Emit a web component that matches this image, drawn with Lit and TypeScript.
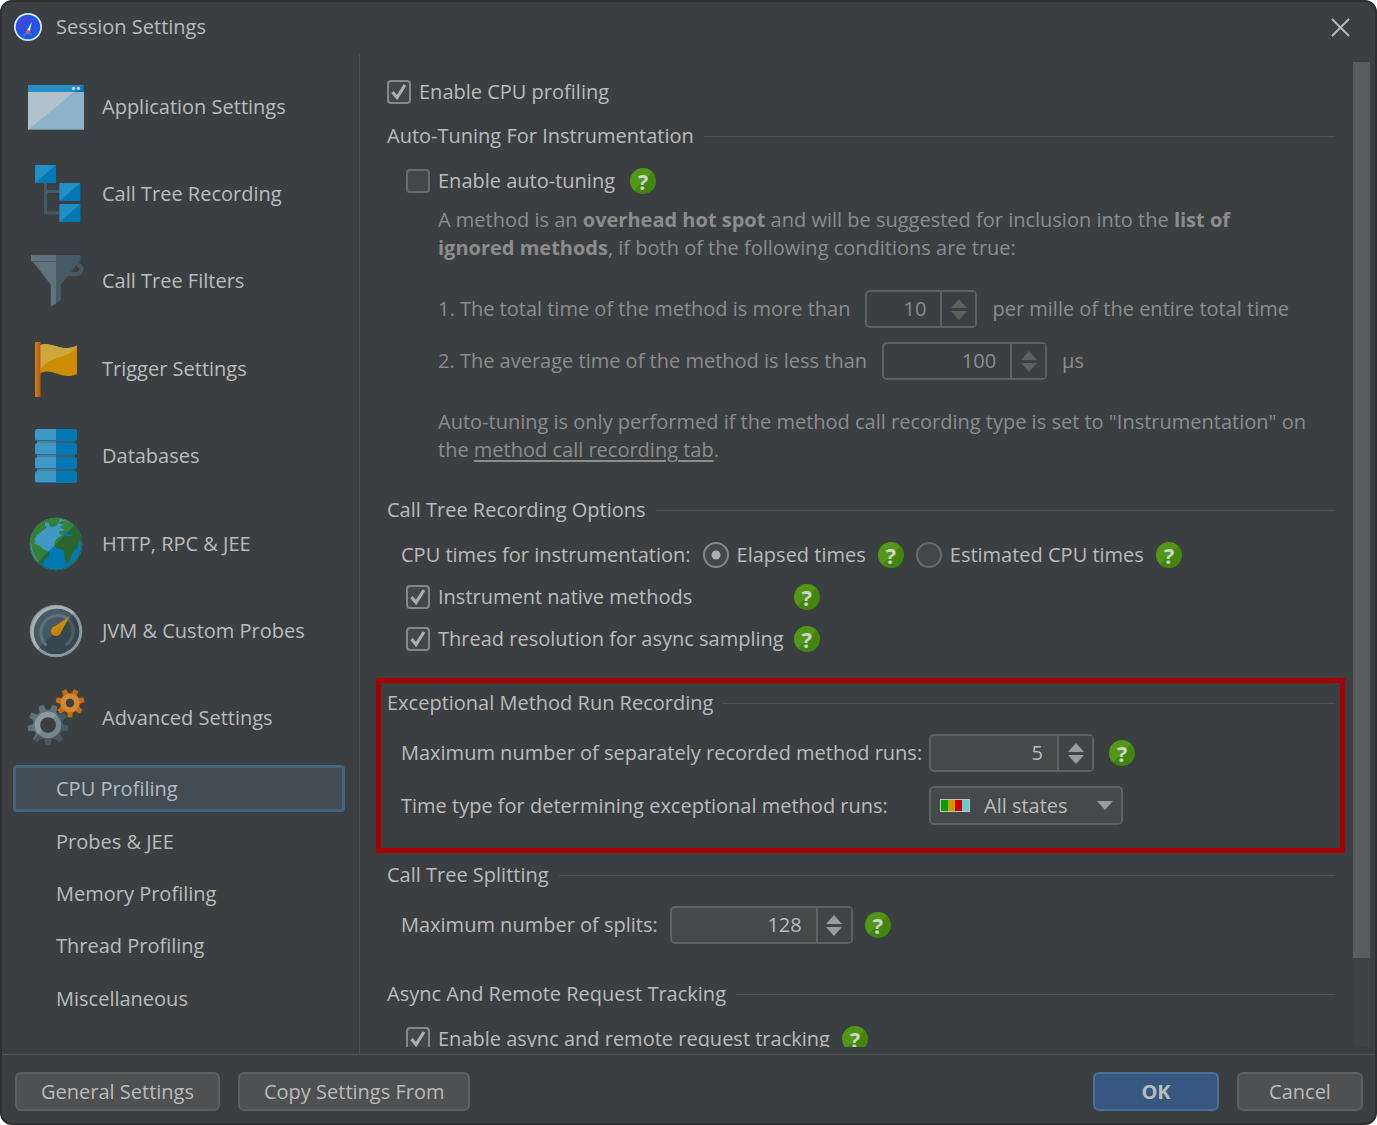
import { LitElement, html, css, svg, nothing } from "lit";
import { customElement, property } from "lit/decorators.js";

/** Outline of a cog whose first tooth points straight down. */
function gearPath(cx: number, cy: number, outer: number, root: number, teeth: number): string {
  const points: string[] = [];
  const step = (Math.PI * 2) / teeth;
  const at = (radius: number, angle: number) =>
    `${(cx + radius * Math.cos(angle)).toFixed(2)} ${(cy + radius * Math.sin(angle)).toFixed(2)}`;
  for (let i = 0; i < teeth; i++) {
    const mid = Math.PI / 2 + i * step;
    points.push(
      at(root, mid - step * 0.32),
      at(outer, mid - step * 0.18),
      at(outer, mid + step * 0.18),
      at(root, mid + step * 0.32),
    );
  }
  return `M${points.join("L")}Z`;
}

const LAND = svg`
  <path d="M90 130C92 96 112 70 140 58C152 53 168 51 178 55L177 68L170 76L160 80L149 80L146 68L137 66L134 73L139 84L124 96L110 106L104 118L106 126L100 134Z"/>
  <path d="M94 128L104 131L116 136L128 146L148 157L146 168L139 176L130 182L131 192L122 188C104 174 95 152 94 128Z"/>
  <path d="M174 68L188 62L208 66L224 78C236 90 244 106 245 122L238 121L234 132L232 146L222 152L214 168L211 182L204 189L196 186L193 170L193 154L184 148L171 146L163 136L165 122L176 112L186 106L182 102L176 100L178 94L188 93L194 88L186 86L181 80L192 76Z"/>
  <circle cx="168" cy="132" r="77.500" fill="none" class="rim"/>
`;

const ICONS: Record<string, unknown> = {
  application: svg`
    <path d="M1 6H55L56 7V51H0V7Z" fill="#8cb3c9"/>
    <path d="M0 13H46L0 51Z" fill="#b2c2cc"/>
    <path d="M1 6H55L56 7V13H0V7Z" fill="#0079b5"/>
    <path d="M1 6H54.500L46 13H0V7Z" fill="#228fc5"/>
    <path d="M0 50.500H56" stroke="#6c8ea3"/>
    <circle cx="45.500" cy="9.500" r="1.800" fill="#bccdd6"/>
    <circle cx="50.500" cy="9.500" r="1.800" fill="#bccdd6"/>`,
  tree: svg`
    <path d="M17.500 17V47H32M17.500 25.500H32" fill="none" stroke="#455a64" stroke-width="3"/>
    <rect x="7" y="-1" width="21" height="18" rx="1" fill="#0079b5"/>
    <path d="M7 17V-1H28Z" fill="#228fc5"/>
    <rect x="31.500" y="17" width="21" height="18" rx="1" fill="#0079b5"/>
    <path d="M31.500 35V17H52.500Z" fill="#228fc5"/>
    <rect x="31.500" y="38" width="21" height="18" rx="1" fill="#0079b5"/>
    <path d="M31.500 56V38H52.500Z" fill="#228fc5"/>`,
  filter: svg`
    <path d="M49 11.500A4.800 4.800 0 0 1 49.500 21H40" fill="none" stroke="#455a64" stroke-width="4"/>
    <path d="M28 2H52.500V8L50.500 9.500L33 31.500V47L28 50.500Z" fill="#455a64"/>
    <path d="M28 2H3V8L5.500 9.500L22.700 31.500V53.500L28 50.500Z" fill="#60727c"/>
    <path d="M4 8.500H28" stroke="#455a64"/>`,
  flag: svg`
    <path d="M12 4.300C20 0 30 8 40 7C43 6.700 46 6 49 4.500V33C33 40 26 26 12 32.300Z" fill="#cc8e00"/>
    <path d="M12 4.300C20 0 30 8 40 7C43 6.700 46 6 49 4.500C42 19 22 13 12 29Z" fill="#cca73b"/>
    <rect x="7" y="1" width="3" height="55" fill="#c77a1c"/>
    <rect x="9.500" y="1" width="3" height="55" fill="#bf6010"/>`,
  database: svg`
    <rect x="9" y="11" width="38" height="34" fill="#455a64"/>
    <rect x="9" y="11" width="19" height="34" fill="#607885"/>
    ${[1, 15, 29, 43].map(
      (y) => svg`
        <rect x="7" y=${y} width="42" height="12" rx="2" fill="#0079b5"/>
        <path d=${`M9 ${y}H28V${y + 11}H8L7 ${y + 10}V${y + 2}Z`} fill="#4099c5"/>`,
    )}`,
  globe: svg`
    <defs>
      <clipPath id="globe-disc"><circle cx="168" cy="132" r="79"/></clipPath>
      <clipPath id="globe-shade"><path d="M100 200L236 64H260V230H100Z"/></clipPath>
    </defs>
    <g transform="translate(-28 -16) scale(.33333)">
      <g clip-path="url(#globe-disc)">
        <rect x="80" y="40" width="180" height="180" fill="#4099c5"/>
        <g fill="#348037" class="land-light">${LAND}</g>
        <g clip-path="url(#globe-shade)">
          <rect x="80" y="40" width="180" height="180" fill="#0079b5"/>
          <g fill="#2d652f" class="land-dark">${LAND}</g>
        </g>
        <path d="M186 101L197 97L204 102L216 104L222 107L205 109L194 105Z" fill="#0079b5"/>
      </g>
    </g>`,
  gauge: svg`
    <circle cx="28" cy="28" r="24.800" fill="#37474f"/>
    <path d="M10.500 45.500A24.800 24.800 0 0 1 45.500 10.500Z" fill="#455a64"/>
    <path d="M18.500 42.300A17 17 0 0 1 40 16" fill="none" stroke="#60727c" stroke-width="3"/>
    <path d="M40 16A17 17 0 0 1 37.500 42.300" fill="none" stroke="#4c5f69" stroke-width="3"/>
    <circle cx="28" cy="28" r="24.800" fill="none" stroke="#8c989e" stroke-width="3"/>
    <path d="M10.500 45.500A24.800 24.800 0 0 1 45.500 10.500" fill="none" stroke="#a8b1b5" stroke-width="3"/>
    <path d="M24.500 25L42 13L31.500 31.500Z" fill="#cc8a0a"/>
    <circle cx="28" cy="28" r="5" fill="#cc8a0a"/>
    <path d="M24.500 31.500L31.500 24.500A5 5 0 0 1 24.500 31.500Z" fill="#c47f00"/>`,
  gears: svg`
    <defs>
      <clipPath id="gear-light"><path d="M-4 60L40 12V0H-4Z"/></clipPath>
    </defs>
    <path d=${gearPath(20, 35, 20.5, 15, 9)} fill="#455a64"/>
    <path d=${gearPath(20, 35, 20.5, 15, 9)} fill="#60727c" clip-path="url(#gear-light)"/>
    <circle cx="20" cy="35" r="10.500" fill="none" stroke="#76868f" stroke-width="5.500"/>
    <circle cx="20" cy="35" r="10.500" fill="none" stroke="#8d999f" stroke-width="5.500" clip-path="url(#gear-light)"/>
    <circle cx="20" cy="35" r="7.800" fill="#3c3f41"/>
    <path d=${gearPath(42, 13, 14.4, 10, 7)} fill="#c86d08"/>
    <circle cx="42" cy="13" r="6.800" fill="none" stroke="#d18a35" stroke-width="5"/>
    <circle cx="42" cy="13" r="4.200" fill="#3c3f41"/>`,
};

const CATEGORIES = [
  { icon: "application", label: "Application Settings" },
  { icon: "tree", label: "Call Tree Recording" },
  { icon: "filter", label: "Call Tree Filters" },
  { icon: "flag", label: "Trigger Settings" },
  { icon: "database", label: "Databases" },
  { icon: "globe", label: "HTTP, RPC & JEE" },
  { icon: "gauge", label: "JVM & Custom Probes" },
  { icon: "gears", label: "Advanced Settings" },
];

const PAGES = ["CPU Profiling", "Probes & JEE", "Memory Profiling", "Thread Profiling", "Miscellaneous"];

/** Round green help button. */
@customElement("help-button")
export class HelpButton extends LitElement {
  static styles = css`
    :host {
      display: block;
      flex: none;
    }
    .help {
      display: grid;
      place-items: center;
      width: 26px;
      height: 26px;
      padding: 0;
      border: 0;
      border-radius: 50%;
      background: linear-gradient(135deg, #549716 50%, #428610 50%);
      color: #cfd3cc;
      font: 700 22px/24px "Noto Sans", "Open Sans", sans-serif;
    }
  `;
  render() {
    return html`<button class="help" type="button" title="Help">?</button>`;
  }
}

/** Tick box or radio button with its label. */
@customElement("choice-box")
export class ChoiceBox extends LitElement {
  @property() kind: "checkbox" | "radio" = "checkbox";
  @property() label = "";
  @property({ type: Boolean }) checked = false;

  static styles = css`
    :host {
      display: block;
    }
    .choice {
      display: flex;
      align-items: center;
      gap: 8px;
      white-space: nowrap;
    }
    .control {
      display: grid;
      flex: none;
    }
    .box,
    .mark {
      grid-area: 1 / 1;
      place-self: center;
    }
    .box {
      appearance: none;
      width: 24px;
      height: 24px;
      margin: 0;
      border: 2px solid #6b6b6b;
      border-radius: 4px;
      background: #43474a;
    }
    .box.checked {
      border-color: #868788;
    }
    .box.radio {
      width: 26px;
      height: 26px;
      border-radius: 50%;
    }
    .mark {
      pointer-events: none;
    }
  `;
  render() {
    const radio = this.kind === "radio";
    const mark = radio
      ? svg`<circle cx="12" cy="12" r="4.500" fill="#adadad"/>`
      : svg`<path d="M5.500 12L10 17.500L18 5" fill="none" stroke="#adadad" stroke-width="3.200"/>`;
    return html`
      <label class="choice">
        <span class="control">
          <input
            class="box ${radio ? "radio" : ""} ${this.checked ? "checked" : ""}"
            type=${this.kind}
            .checked=${this.checked}
          />
          ${this.checked
            ? html`<svg class="mark" width="24" height="24" viewBox="0 0 24 24">${mark}</svg>`
            : nothing}
        </span>
        <span>${this.label}</span>
      </label>
    `;
  }
}

/** Number field with stacked up and down buttons. */
@customElement("number-field")
export class NumberField extends LitElement {
  @property() value = "";
  @property() label = "";
  @property() size: "small" | "medium" | "large" = "medium";
  @property({ type: Boolean }) disabled = false;

  static styles = css`
    :host {
      display: block;
      flex: none;
    }
    .field {
      display: flex;
      box-sizing: border-box;
      height: 38px;
      border: 2px solid #5f6162;
      border-radius: 5px;
      background: #45494a;
      color: #bbbbbb;
    }
    .small {
      width: 112px;
    }
    .medium {
      width: 165px;
    }
    .large {
      width: 183px;
    }
    .value {
      flex: 1;
      min-width: 0;
      padding: 0 14px 0 8px;
      border: 0;
      background: none;
      color: inherit;
      font: inherit;
      text-align: right;
    }
    .steps {
      display: flex;
      flex-direction: column;
      justify-content: center;
      gap: 3px;
      width: 33px;
      border-left: 2px solid #5f6162;
      background: #404446;
    }
    .step {
      display: grid;
      place-items: center;
      padding: 0;
      border: 0;
      background: none;
      color: #9c9c9c;
    }
    .step svg {
      display: block;
    }
    .disabled,
    .disabled .steps {
      background: #3c3f41;
    }
    .disabled {
      color: #8c8c8c;
    }
    .disabled .step {
      color: #5e5f5f;
    }
  `;
  render() {
    return html`
      <div class="field ${this.size} ${this.disabled ? "disabled" : ""}">
        <input class="value" inputmode="numeric" aria-label=${this.label} .value=${this.value} ?disabled=${this.disabled} />
        <div class="steps">
          <button class="step" type="button" aria-label="Increase" ?disabled=${this.disabled}>
            <svg width="16" height="9" viewBox="0 0 16 9"><path d="M0 9L8 0L16 9Z" fill="currentColor" /></svg>
          </button>
          <button class="step" type="button" aria-label="Decrease" ?disabled=${this.disabled}>
            <svg width="16" height="9" viewBox="0 0 16 9"><path d="M0 0L8 9L16 0Z" fill="currentColor" /></svg>
          </button>
        </div>
      </div>
    `;
  }
}

@customElement("app-root")
export class AppRoot extends LitElement {
  static styles = css`
    :host {
      display: block;
      height: 100vh;
      background: #ffffff;
      color: #bbbbbb;
      font: 20px/28px "Open Sans", "Noto Sans", sans-serif;
    }
    .window {
      display: flex;
      flex-direction: column;
      box-sizing: border-box;
      height: 100%;
      border: 2px solid #2f2f2f;
      border-radius: 12px;
      background: #3c3f41;
      overflow: hidden;
    }
    .titlebar {
      display: flex;
      align-items: center;
      flex: none;
      gap: 14px;
      height: 50px;
      padding: 0 24px 2px 12px;
    }
    .title {
      flex: 1;
      margin: 0;
      font: inherit;
    }
    .close {
      display: grid;
      padding: 0;
      border: 0;
      background: none;
    }
    .body {
      display: flex;
      flex: 1;
      min-height: 0;
    }

    .sidebar {
      flex: none;
      box-sizing: border-box;
      width: 358px;
      padding: 9px 14px 0 11px;
      border-right: 1px solid #505355;
    }
    .categories,
    .pages {
      display: grid;
      grid-auto-rows: 1fr;
      align-items: center;
      margin: 0;
      padding: 0;
      list-style: none;
    }
    .categories {
      height: 699px;
    }
    .pages {
      height: 262px;
    }
    .category,
    .page {
      display: flex;
      align-items: center;
      box-sizing: border-box;
      width: 100%;
      border: 0;
      background: none;
      color: inherit;
      font: inherit;
      text-align: left;
      white-space: nowrap;
    }
    .category {
      gap: 18px;
      padding: 0 15px;
    }
    .category svg {
      flex: none;
      overflow: visible;
    }
    .page {
      height: 47px;
      padding: 2px 40px 0;
      border: 3px solid transparent;
      border-radius: 4px;
    }
    .page.selected {
      border-color: #43647d;
      background: #414c55;
      color: #b3bbc1;
    }
    .rim {
      stroke-width: 4;
    }
    .land-light .rim {
      stroke: #348037;
    }
    .land-dark .rim {
      stroke: #2d652f;
    }

    .main {
      display: flex;
      flex: 1;
      gap: 18px;
      min-width: 0;
      padding: 8px 5px 7px 27px;
    }
    .scroll {
      flex: 1;
      min-width: 0;
      margin-left: -27px;
      padding-left: 27px;
      padding-right: 18px;
      margin-right: -18px;
      overflow: hidden;
    }
    .track {
      flex: none;
      width: 17px;
      background: #3f4244;
    }
    .thumb {
      height: 91%;
      background: #585c5f;
    }

    .content {
      display: flex;
      flex-direction: column;
      padding-top: 16px;
    }
    .section {
      position: relative;
      display: flex;
      flex-direction: column;
    }
    .section + .section {
      margin-top: 36px;
    }
    .first {
      margin-top: 16px;
    }
    .first + .section {
      margin-top: 32px;
    }
    .heading {
      display: flex;
      align-items: center;
      gap: 10px;
      margin: 0 0 17px;
      font: inherit;
      white-space: nowrap;
    }
    .heading::after {
      content: "";
      flex: 1;
      height: 1px;
      background: #515456;
    }
    .row {
      display: flex;
      align-items: center;
      gap: 15px;
      white-space: nowrap;
    }
    .inset {
      padding-left: 14px;
    }
    .indent {
      padding-left: 19px;
    }
    .notes {
      display: flex;
      flex-direction: column;
      gap: 14px;
      padding-left: 51px;
      color: #8c8c8c;
    }
    .note {
      max-width: 870px;
      margin: 11px 0 14px;
    }
    .note.last {
      margin: 14px 0 0;
    }
    .link {
      color: inherit;
      text-underline-offset: 3px;
    }
    .tight {
      gap: 12px;
    }
    .options {
      display: grid;
      grid-template-columns: max-content max-content;
      gap: 14px 10px;
      align-items: center;
      margin-top: 14px;
    }
    .form {
      display: grid;
      grid-template-columns: 513px max-content;
      gap: 14px 15px;
      align-items: center;
      white-space: nowrap;
    }
    .highlight::before {
      content: "";
      position: absolute;
      inset: -11px -10px -28px -11px;
      border: 5px solid #a80000;
      pointer-events: none;
    }
    .state {
      position: relative;
      display: grid;
      align-items: center;
      justify-self: start;
    }
    .state-icon,
    .state-arrow {
      position: absolute;
      pointer-events: none;
    }
    .state-icon {
      left: 11px;
    }
    .state-arrow {
      right: 10px;
    }
    .state-select {
      appearance: none;
      width: 194px;
      height: 39px;
      padding: 0 32px 0 53px;
      border: 2px solid #5f6162;
      border-radius: 5px;
      background: #45494a;
      color: inherit;
      font: inherit;
    }

    .footer {
      display: flex;
      flex: none;
      gap: 18px;
      padding: 17px 12px 12px 13px;
      border-top: 1px solid #515456;
    }
    .spacer {
      flex: 1;
    }
    .button {
      height: 39px;
      min-width: 126px;
      padding: 0 24px;
      border: 2px solid #5e6060;
      border-radius: 6px;
      background: #4e5051;
      color: inherit;
      font: inherit;
      line-height: 28px;
    }
    .button.primary {
      border-color: #4a6f98;
      background: #365880;
      font-weight: 700;
    }
  `;

  private renderSidebar() {
    return html`
      <nav class="sidebar" aria-label="Settings categories">
        <ul class="categories">
          ${CATEGORIES.map(
            ({ icon, label }) => html`
              <li>
                <button class="category" type="button">
                  <svg width="56" height="56" viewBox="0 0 56 56" aria-hidden="true">${ICONS[icon]}</svg>
                  ${label}
                </button>
              </li>
            `,
          )}
        </ul>
        <ul class="pages">
          ${PAGES.map(
            (page, i) => html`
              <li><button class="page ${i === 0 ? "selected" : ""}" type="button">${page}</button></li>
            `,
          )}
        </ul>
      </nav>
    `;
  }

  private renderContent() {
    return html`
      <div class="content">
        <choice-box label="Enable CPU profiling" checked></choice-box>

        <section class="section first">
          <h2 class="heading">Auto-Tuning For Instrumentation</h2>
          <div class="row indent">
            <choice-box label="Enable auto-tuning"></choice-box>
            <help-button></help-button>
          </div>
          <div class="notes">
            <p class="note">
              A method is an <b>overhead hot spot</b> and will be suggested for inclusion into the
              <b>list of ignored methods</b>, if both of the following conditions are true:
            </p>
            <div class="row">
              <span>1. The total time of the method is more than</span>
              <number-field value="10" size="small" label="Total time" disabled></number-field>
              <span>per mille of the entire total time</span>
            </div>
            <div class="row">
              <span>2. The average time of the method is less than</span>
              <number-field value="100" label="Average time" disabled></number-field>
              <span>µs</span>
            </div>
            <p class="note last">
              Auto-tuning is only performed if the method call recording type is set to "Instrumentation" on the
              <a class="link" href="#recording">method call recording tab</a>.
            </p>
          </div>
        </section>

        <section class="section">
          <h2 class="heading">Call Tree Recording Options</h2>
          <div class="row tight inset">
            <span>CPU times for instrumentation:</span>
            <choice-box kind="radio" label="Elapsed times" checked></choice-box>
            <help-button></help-button>
            <choice-box kind="radio" label="Estimated CPU times"></choice-box>
            <help-button></help-button>
          </div>
          <div class="options indent">
            <choice-box label="Instrument native methods" checked></choice-box>
            <help-button></help-button>
            <choice-box label="Thread resolution for async sampling" checked></choice-box>
            <help-button></help-button>
          </div>
        </section>

        <section class="section highlight">
          <h2 class="heading">Exceptional Method Run Recording</h2>
          <div class="form inset">
            <span>Maximum number of separately recorded method runs:</span>
            <div class="row">
              <number-field value="5" label="Maximum number of separately recorded method runs"></number-field>
              <help-button></help-button>
            </div>
            <label for="time-type">Time type for determining exceptional method runs:</label>
            <div class="state">
              <select class="state-select" id="time-type">
                <option>All states</option>
              </select>
              <svg class="state-icon" width="30" height="13" viewBox="0 0 30 13" aria-hidden="true">
                <rect width="30" height="13" fill="#c4c4c4" />
                <rect x="1" y="1" width="7" height="11" fill="#009e00" />
                <rect x="8" y="1" width="7" height="11" fill="#cc9c00" />
                <rect x="15" y="1" width="7" height="11" fill="#cc0000" />
                <rect x="22" y="1" width="7" height="11" fill="#66cccc" />
              </svg>
              <svg class="state-arrow" width="16" height="9" viewBox="0 0 16 9" aria-hidden="true">
                <path d="M0 0H16L8 9Z" fill="#9c9c9c" />
              </svg>
            </div>
          </div>
        </section>

        <section class="section">
          <h2 class="heading">Call Tree Splitting</h2>
          <div class="row tight inset">
            <span>Maximum number of splits:</span>
            <number-field value="128" size="large" label="Maximum number of splits"></number-field>
            <help-button></help-button>
          </div>
        </section>

        <section class="section">
          <h2 class="heading">Async And Remote Request Tracking</h2>
          <div class="row tight indent">
            <choice-box label="Enable async and remote request tracking" checked></choice-box>
            <help-button></help-button>
          </div>
        </section>
      </div>
    `;
  }

  render() {
    return html`
      <div class="window">
        <header class="titlebar">
          <svg width="28" height="28" viewBox="0 0 28 28" aria-hidden="true">
            <circle cx="14" cy="14" r="14" fill="#dde6f4" />
            <circle cx="14" cy="14" r="12.300" fill="#1c56e6" />
            <path d="M7 17.500A7.800 7.800 0 0 1 15.500 6.300" fill="none" stroke="#7a2fd0" stroke-width="2" />
            <path d="M18.500 8A7.800 7.800 0 0 1 21 17.500" fill="none" stroke="#5a3ce0" stroke-width="2" />
            <path d="M9.500 22.500Q14 18 18.500 22.500" fill="none" stroke="#2f9ae0" stroke-width="1.500" stroke-dasharray="1.500 1" />
            <path d="M12.500 18.500L18 8.500L15.500 19Z" fill="#ffffff" />
            <circle cx="14" cy="19" r="2" fill="#f0503c" />
          </svg>
          <h1 class="title">Session Settings</h1>
          <button class="close" type="button" aria-label="Close">
            <svg width="21" height="21" viewBox="0 0 21 21">
              <path d="M2 2L19 19M19 2L2 19" stroke="#bbbbbb" stroke-width="1.800" />
            </svg>
          </button>
        </header>
        <div class="body">
          ${this.renderSidebar()}
          <main class="main">
            <div class="scroll">${this.renderContent()}</div>
            <div class="track"><div class="thumb"></div></div>
          </main>
        </div>
        <footer class="footer">
          <button class="button" type="button">General Settings</button>
          <button class="button" type="button">Copy Settings From</button>
          <span class="spacer"></span>
          <button class="button primary" type="button">OK</button>
          <button class="button" type="button">Cancel</button>
        </footer>
      </div>
    `;
  }
}
